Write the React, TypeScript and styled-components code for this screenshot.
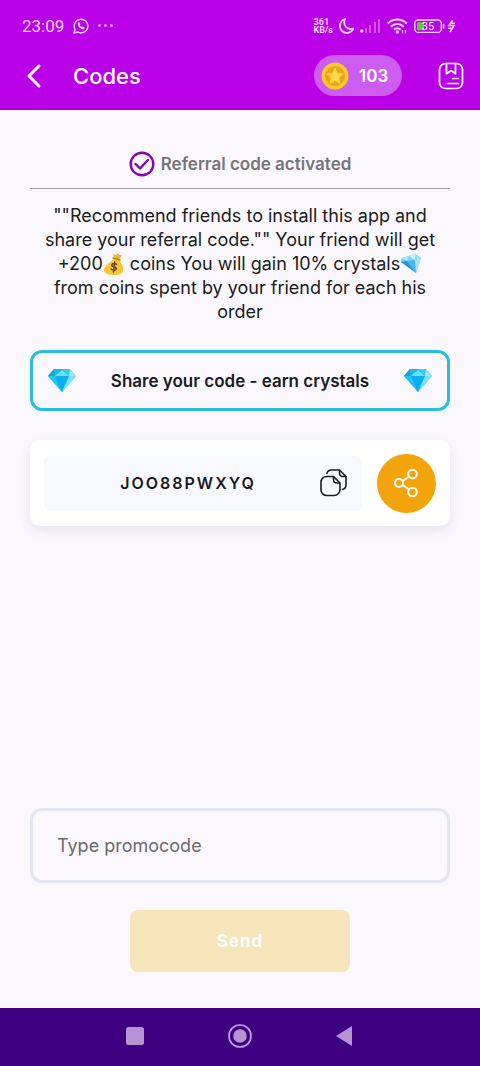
import React from "react";
import styled, { createGlobalStyle } from "styled-components";

const GlobalStyle = createGlobalStyle`
  *, *::before, *::after { box-sizing: border-box; }
  body { margin: 0; background: #faf8fc; }
  button, input { font: inherit; color: inherit; margin: 0; }
  button { padding: 0; border: 0; background: none; cursor: pointer; }
  svg { display: block; flex: none; }
`;

const Screen = styled.div`
  min-height: 100vh;
  display: flex;
  flex-direction: column;
  background: #faf8fc;
  color: #1b1b20;
  font-family: Inter, "Liberation Sans", sans-serif;
`;

const Top = styled.header`
  background: #b900e7;
  border-bottom: 1px solid #a800d6;
  color: #fff;
`;

const StatusBar = styled.div`
  height: 42px;
  padding: 10px 24px 0 22px;
  display: flex;
  align-items: center;
  justify-content: space-between;
  color: #f5d3fd;
  font-family: Roboto, sans-serif;
`;

const StatusGroup = styled.div<{ $gap: number }>`
  display: flex;
  align-items: center;
  gap: ${(p) => p.$gap}px;
`;

const Clock = styled.span`
  font-size: 17px;
  line-height: 20px;
`;

const NetSpeed = styled.span`
  font-size: 9px;
  line-height: 8px;
  font-weight: 700;
`;

const NavBar = styled.div`
  height: 67px;
  padding: 0 16px 0 20px;
  display: flex;
  align-items: center;
`;

const IconButton = styled.button`
  display: flex;
  align-items: center;
  justify-content: center;
`;

const Title = styled.h1`
  margin: 0 auto 0 25px;
  font-size: 22px;
  line-height: 28px;
  font-weight: 500;
`;

const Balance = styled.div`
  height: 41px;
  width: 88px;
  margin-right: 36px;
  padding-left: 7px;
  display: flex;
  align-items: center;
  gap: 10px;
  border-radius: 21px;
  background: #cd5cf0;
  font-size: 17px;
  font-weight: 600;
`;

const Main = styled.main`
  flex: 1;
  padding: 38px 30px 36px;
  display: flex;
  flex-direction: column;
`;

const Activated = styled.div`
  height: 41px;
  padding-bottom: 9px;
  display: flex;
  align-items: center;
  justify-content: center;
  gap: 6px;
  border-bottom: 1px solid #a5a3a8;
  color: #77747a;
  font-size: 17px;
  font-weight: 600;
`;

const Description = styled.p`
  margin: 15px 10px 26px;
  font-size: 18px;
  line-height: 24px;
  text-align: center;

  svg {
    display: inline-block;
    vertical-align: -5px;
  }
`;

const Together = styled.span`
  white-space: nowrap;
`;

const ShareBanner = styled.button`
  height: 61px;
  padding: 0 15px;
  display: flex;
  align-items: center;
  justify-content: space-between;
  border: 3px solid #27bfdd;
  border-radius: 12px;
  font-size: 17px;
  font-weight: 600;
`;

const CodeCard = styled.section`
  margin-top: 29px;
  height: 86px;
  padding: 0 14px;
  display: flex;
  align-items: center;
  gap: 15px;
  border-radius: 10px;
  background: #fff;
  box-shadow: 0 4px 12px rgba(90, 60, 170, 0.12);
`;

const CodeField = styled.div`
  flex: 1;
  height: 55px;
  padding: 0 14px 0 12px;
  display: flex;
  align-items: center;
  border-radius: 6px;
  background: #f8f9fe;
`;

const Code = styled.output`
  flex: 1;
  text-align: center;
  font-size: 16px;
  font-weight: 600;
  letter-spacing: 2px;
`;

const ShareButton = styled(IconButton)`
  width: 59px;
  height: 59px;
  border-radius: 50%;
  background: #f4a40b;
`;

const PromoForm = styled.form`
  margin-top: auto;
  display: flex;
  flex-direction: column;
  align-items: center;
  gap: 27px;
`;

const PromoInput = styled.input`
  width: 100%;
  height: 75px;
  padding: 0 24px;
  border: 3px solid #e3e5f0;
  border-radius: 12px;
  background: transparent;
  font-size: 18px;
  outline: none;

  &::placeholder {
    color: #6c6a70;
    opacity: 1;
  }
`;

const SendButton = styled.button`
  width: 220px;
  height: 62px;
  border-radius: 8px;
  background: #f6e4bb;
  color: #fff;
  font-size: 17px;
  font-weight: 700;
  letter-spacing: 1px;
`;

const SystemNav = styled.nav`
  height: 58px;
  padding: 0 120px 2px;
  display: flex;
  align-items: center;
  justify-content: space-between;
  background: #3d0080;
`;

const Diamond = () => (
  <svg width="28" height="23" viewBox="0 0 28 23" aria-hidden="true">
    <path d="M6 0h16l6 7-14 16L0 7z" fill="#1cb4ee" />
    <path d="M6 0 0 7h7z" fill="#16a4d6" />
    <path d="M6 0h8L7 7z" fill="#23b9dd" />
    <path d="M14 0h8l-1 7z" fill="#3ccbf3" />
    <path d="M22 0l6 7h-7z" fill="#9be9fb" />
    <path d="M7 7h14l-7-6z" fill="#6fdff8" />
    <path d="M0 7h7l7 16z" fill="#22c2fa" />
    <path d="M7 7h14l-7 16z" fill="#08b0ee" />
    <path d="M21 7h7L14 23z" fill="#7ce0fb" />
  </svg>
);

const TiltedGem = () => (
  <svg width="22" height="22" viewBox="0 0 22 22" aria-hidden="true">
    <path d="M2 5l13-4 6 4-5 15L1 9z" fill="#55c1ee" />
    <path d="M2 5L1 9l6-1z" fill="#6fd3f5" />
    <path d="M2 5l7-2-2 5z" fill="#b7edfb" />
    <path d="M9 3l6 4-8 1z" fill="#7fdcf7" />
    <path d="M9 3l6-2v6z" fill="#d3f5fd" />
    <path d="M15 1l6 4-6 2z" fill="#8fdff8" />
    <path d="M1 9l6-1 9 12z" fill="#2a94d6" />
    <path d="M7 8l8-1 1 13z" fill="#4ab6ea" />
    <path d="M15 7l6-2-5 15z" fill="#a5e6fa" />
  </svg>
);

const MoneyBag = () => (
  <svg width="22" height="22" viewBox="0 0 22 22" aria-hidden="true">
    <path d="M10 1l3 1 2-2 1 2 3 0-3 5-5-1z" fill="#f2b62d" />
    <path d="M11 6l5 1c3 4 5 8 4 11-1 3-4 4-9 4s-9-1-10-4c-1-4 5-8 10-12z" fill="#fcc52f" />
    <path d="M10 5l7 2" stroke="#b9801c" strokeWidth="1.5" strokeLinecap="round" />
    <path
      d="M13.5 11.5c-1-1.3-4.3-1.5-4.8.3-.6 2.4 4.9 1.5 4.6 4-.3 2-4 1.7-5.2.2M11.7 9l-1.3 10"
      fill="none"
      stroke="#5e4420"
      strokeWidth="1.4"
      strokeLinecap="round"
    />
  </svg>
);

const App: React.FC = () => (
  <>
    <GlobalStyle />
    <Screen>
      <Top>
        <StatusBar>
          <StatusGroup $gap={9}>
            <Clock>23:09</Clock>
            <svg width="16" height="16" viewBox="0 0 16 16" fill="none" stroke="currentColor" aria-hidden="true">
              <path d="M1 15l1-3.8A6.8 6.8 0 1 1 4.700 14z" strokeWidth="1.4" strokeLinejoin="round" />
              <path
                d="M5.600 4.300l1.100.1.7 1.800-.7.9c.5 1 1.200 1.700 2.200 2.200l.9-.9 1.800.8c.1 1.400-.9 2.200-2 2C7 10.700 5 8.700 4.700 6.300c0-.8.300-1.500.9-2z"
                fill="currentColor"
                stroke="none"
              />
            </svg>
            <svg width="15" height="4" viewBox="0 0 15 4" fill="currentColor" aria-hidden="true">
              <circle cx="1.500" cy="1.500" r="1.300" />
              <circle cx="7.500" cy="1.500" r="1.300" />
              <circle cx="13.500" cy="1.500" r="1.300" />
            </svg>
          </StatusGroup>
          <StatusGroup $gap={6}>
            <NetSpeed>
              361
              <br />
              KB/s
            </NetSpeed>
            <svg width="15" height="16" viewBox="0 0 15 16" fill="none" stroke="currentColor" strokeWidth="1.800" strokeLinejoin="round" aria-hidden="true">
              <path d="M6 1C.500 3-.500 9.500 3 13c3.500 3.500 9.500 2 11.200-2.500C8 12.500 3.500 7 6 1z" />
            </svg>
            <svg width="21" height="14" viewBox="0 0 21 14" fill="currentColor" aria-hidden="true">
              <circle cx="1.800" cy="12" r="1.700" />
              <g opacity=".4">
                <rect x="5" y="9" width="2" height="5" />
                <rect x="9" y="6" width="2" height="8" />
                <rect x="14" y="3" width="2" height="11" />
                <rect x="18" y="0" width="2" height="14" />
              </g>
            </svg>
            <svg width="21" height="16" viewBox="0 0 21 16" fill="none" stroke="currentColor" strokeWidth="2" aria-hidden="true">
              <path d="M.8 5.500c5.500-5.300 13.500-5.300 19 0M3.800 8.700c4-3.600 9-3.600 13 0M6.900 11.800c2-2 4.800-2 6.800 0" />
              <circle cx="10.300" cy="14" r="1.700" fill="currentColor" stroke="none" />
              <path d="M15.500 15.500v-3.500M18.500 12v3.500" strokeWidth="1.200" />
            </svg>
            <svg width="42" height="15" viewBox="0 0 42 15" fill="none" aria-label="Battery 35 percent">
              <rect x=".8" y="1" width="26.500" height="12.400" rx="3.500" stroke="currentColor" strokeWidth="1.400" />
              <rect x="3" y="3.200" width="7" height="8" rx="1" fill="#5ecb35" />
              <path d="M29.600 5.500v3.800" stroke="currentColor" strokeWidth="1.600" strokeLinecap="round" />
              <text x="14" y="11.200" textAnchor="middle" fontSize="11" fill="#fff">35</text>
              <path d="M38.500 1.500L35 6.500h5L36 13M34 9.300h3.500M37.500 4.300h3.500" stroke="currentColor" strokeWidth="1.600" />
            </svg>
          </StatusGroup>
        </StatusBar>
        <NavBar>
          <IconButton type="button" aria-label="Back">
            <svg width="28" height="28" viewBox="0 0 28 28" fill="none" stroke="#fff" strokeWidth="3" strokeLinecap="round" strokeLinejoin="round">
              <path d="M19 4 9 14l10 10" />
            </svg>
          </IconButton>
          <Title>Codes</Title>
          <Balance>
            <svg width="28" height="28" viewBox="0 0 28 28" aria-hidden="true">
              <circle cx="14" cy="14" r="13.500" fill="#fbcb25" />
              <circle cx="14" cy="14" r="10" fill="#eea51c" />
              <path d="M14 6.500l2.300 4.900 5.300.7-3.900 3.700 1 5.300-4.700-2.600-4.700 2.600 1-5.300-3.900-3.700 5.300-.7z" fill="#ffd84a" stroke="#ffd84a" strokeLinejoin="round" />
            </svg>
            103
          </Balance>
          <IconButton type="button" aria-label="Code history">
            <svg width="26" height="28" viewBox="0 0 26 28" fill="none" stroke="#fff" strokeWidth="1.700" strokeLinecap="round" strokeLinejoin="round">
              <rect x="1.500" y="1.500" width="23" height="25" rx="6" />
              <path d="M8.500 1.500v10.200l4.500-3.200 4.500 3.200V1.500M14.500 16.500h6M9.500 21.500h11" />
            </svg>
          </IconButton>
        </NavBar>
      </Top>

      <Main>
        <Activated>
          <svg width="26" height="26" viewBox="0 0 26 26" fill="none" stroke="#8a00b8" strokeWidth="2.400" strokeLinecap="round" strokeLinejoin="round" aria-hidden="true">
            <circle cx="13" cy="13" r="11.300" />
            <path d="M6.500 13l4.500 4.500L19 9" />
          </svg>
          Referral code activated
        </Activated>

        <Description>
          ""Recommend friends to install this app and share your referral code."" Your friend will get{" "}
          <Together>
            +200
            <MoneyBag />
          </Together>
          {" coins You will gain 10% "}
          <Together>
            crystals
            <TiltedGem />
          </Together>
          {" from coins spent by your friend for each his order"}
        </Description>

        <ShareBanner type="button">
          <Diamond />
          Share your code - earn crystals
          <Diamond />
        </ShareBanner>

        <CodeCard>
          <CodeField>
            <Code>JOO88PWXYQ</Code>
            <IconButton type="button" aria-label="Copy code">
              <svg width="28" height="28" viewBox="0 0 28 28" fill="none" stroke="#1b1b20" strokeWidth="1.600" strokeLinecap="round" strokeLinejoin="round">
                <path d="M13.500 7.500H6.500a5.500 5.500 0 0 0-5.500 5.500V21a5.500 5.500 0 0 0 5.500 5.500h7.500a6 6 0 0 0 6-6V14zM13.500 7.500V10.500c0 2.300 1.200 3.500 3.500 3.500H20" />
                <path d="M7 4.300C7.500 2 9 1 11.500 1H19.500l6.500 6.500V15.500c0 3-1 4.500-3.500 5M19.500 1v3c0 2.300 1.200 3.500 3.500 3.500h3" />
              </svg>
            </IconButton>
          </CodeField>
          <ShareButton type="button" aria-label="Share code">
            <svg width="26" height="30" viewBox="0 0 26 30" fill="none" stroke="#fff" strokeWidth="2">
              <circle cx="5" cy="15" r="4" />
              <circle cx="18.500" cy="6" r="4.300" />
              <circle cx="18.500" cy="24" r="4.300" />
              <path d="M8.500 13l6.500-4.500M8.500 17l6.500 4.500" />
            </svg>
          </ShareButton>
        </CodeCard>

        <PromoForm>
          <PromoInput type="text" aria-label="Promocode" placeholder="Type promocode" />
          <SendButton type="submit" disabled>
            Send
          </SendButton>
        </PromoForm>
      </Main>

      <SystemNav>
        <IconButton type="button" aria-label="Recent apps">
          <svg width="30" height="26" viewBox="0 0 30 26">
            <rect x="6" y="4" width="18" height="18" rx="2.500" fill="#b893d2" />
          </svg>
        </IconButton>
        <IconButton type="button" aria-label="Home">
          <svg width="26" height="26" viewBox="0 0 26 26">
            <circle cx="13" cy="13" r="11" fill="none" stroke="#c99be3" strokeWidth="1.700" />
            <circle cx="13" cy="13" r="6.800" fill="#b893d2" />
          </svg>
        </IconButton>
        <IconButton type="button" aria-label="System back">
          <svg width="30" height="26" viewBox="0 0 30 26">
            <path d="M22 3v20L6 13z" fill="#b893d2" />
          </svg>
        </IconButton>
      </SystemNav>
    </Screen>
  </>
);

export default App;
